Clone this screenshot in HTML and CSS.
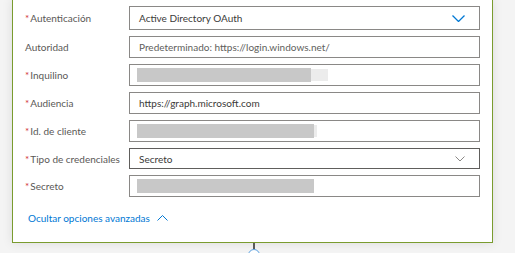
FILE: index.html
```html
<!DOCTYPE html>
<html lang="es">

<head>
    <meta charset="UTF-8" />
    <title>Conexión</title>
    <link rel="stylesheet" href="styles.css">
</head>

<body>
    <div class="canvas">
        <div class="card">
            <div class="form-grid">
                <label class="field-label"><span class="req">*</span>Autenticación</label>
                <div class="field field-select field-tall">
                    <span class="field-text">Active Directory OAuth</span>
                    <svg class="chevron chevron-blue" width="13" height="7" viewBox="0 0 13 7">
                        <path d="M0.5 0.5 L6.5 6.5 L12.5 0.5" fill="none" stroke="#0078d4" stroke-width="1.3" />
                    </svg>
                </div>

                <label class="field-label">Autoridad</label>
                <div class="field">
                    <span class="field-text field-placeholder">Predeterminado: https://login.windows.net/</span>
                </div>

                <label class="field-label"><span class="req">*</span>Inquilino</label>
                <div class="field">
                    <span class="redacted" style="width: 174px"></span><span class="redacted-tail" style="width: 17px"></span>
                </div>

                <label class="field-label"><span class="req">*</span>Audiencia</label>
                <div class="field">
                    <span class="field-text">https://graph.microsoft.com</span>
                </div>

                <label class="field-label"><span class="req">*</span>Id. de cliente</label>
                <div class="field">
                    <span class="redacted" style="width: 177px"></span><span class="redacted-tail" style="width: 3px"></span>
                </div>

                <label class="field-label"><span class="req">*</span>Tipo de credenciales</label>
                <div class="field field-select field-active">
                    <span class="field-text">Secreto</span>
                    <svg class="chevron" width="10" height="6" viewBox="0 0 10 6">
                        <path d="M0.5 0.5 L5 5 L9.5 0.5" fill="none" stroke="#8a8886" stroke-width="1" />
                    </svg>
                </div>

                <label class="field-label"><span class="req">*</span>Secreto</label>
                <div class="field">
                    <span class="redacted" style="width: 177px"></span>
                </div>
            </div>

            <a class="advanced-link" href="#">
                Ocultar opciones avanzadas
                <svg width="11" height="6" viewBox="0 0 11 6">
                    <path d="M0.5 5.5 L5.5 0.5 L10.5 5.5" fill="none" stroke="#0078d4" stroke-width="1" />
                </svg>
            </a>
        </div>

        <div class="connector">
            <span class="connector-line"></span>
            <span class="connector-dot"></span>
        </div>
    </div>
</body>

</html>
```

FILE: styles.css
```css
:root {
    --text: #3b3a39;
    --text-muted: #605e5c;
    --border: #8a8886;
    --border-strong: #605e5c;
    --blue: #0078d4;
    --green: #7a9c2f;
    --canvas: #f4f4f4;
}

* {
    margin: 0;
    padding: 0;
    box-sizing: border-box;
}

body {
    font-family: 'Lato', 'Open Sans', sans-serif;
    font-size: 10px;
    color: var(--text);
    background-color: var(--canvas);
    overflow: hidden;
}

.canvas {
    width: 515px;
    height: 253px;
    display: flex;
    flex-direction: column;
    align-items: flex-start;
}

.card {
    width: 481px;
    margin: -1px 0 0 12px;
    padding: 6px 12px 17px 12px;
    background-color: white;
    border: 1px solid var(--green);
    box-shadow: 0 0 10px rgba(0, 0, 0, 0.1);
}

.form-grid {
    display: grid;
    grid-template-columns: 104px 351px;
    row-gap: 6px;
    align-items: center;
}

.field-label {
    color: #5a5856;
    white-space: nowrap;
}

.req {
    color: #d13438;
    margin-right: 1px;
}

.field {
    height: 22px;
    display: flex;
    align-items: center;
    padding: 0 9px 0 7px;
    border: 1px solid var(--border);
    background-color: white;
}

.field-tall {
    height: 24px;
}

.field-select {
    justify-content: space-between;
}

.field-active {
    border-color: var(--border-strong);
    height: 21px;
}

.field-text {
    padding-left: 2px;
    white-space: nowrap;
}

.field-placeholder {
    color: var(--text-muted);
}

.chevron {
    margin-right: 5px;
}

.chevron-blue {
    margin-right: 5px;
}

.redacted {
    height: 14px;
    background-color: #c8c8c8;
}

.redacted-tail {
    height: 12px;
    background-color: #ececec;
}

.advanced-link {
    display: inline-flex;
    align-items: center;
    gap: 7px;
    margin: 14px 0 0 3px;
    line-height: 14px;
    color: var(--blue);
    text-decoration: none;
}

.connector {
    width: 100%;
    display: flex;
    flex-direction: column;
    align-items: center;
    margin-left: -4px;
}

.connector-line {
    width: 2px;
    height: 6px;
    background-color: #5a5a5a;
}

.connector-dot {
    width: 12px;
    height: 12px;
    border: 1.5px solid #5aa0e0;
    border-radius: 50%;
    background-color: white;
}
```
